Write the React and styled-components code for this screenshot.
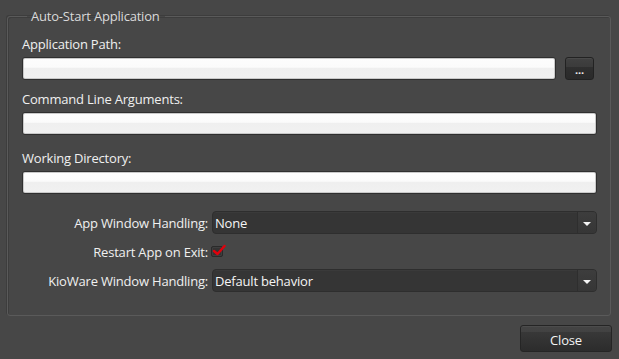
import React from "react";
import styled, { createGlobalStyle } from "styled-components";

const GlobalStyle = createGlobalStyle`
  html, body {
    margin: 0;
    padding: 0;
    background: #474747;
  }
  body {
    font-family: "Open Sans", "Liberation Sans", sans-serif;
    font-size: 13px;
    letter-spacing: -0.2px;
    color: #ededed;
  }
`;

const Dialog = styled.div`
  width: 619px;
  height: 359px;
  box-sizing: border-box;
  padding: 8px 8px 0 7px;
  display: flex;
  flex-direction: column;
`;

const Group = styled.fieldset`
  margin: 0;
  height: 308px;
  box-sizing: border-box;
  border: 1px solid #5a5a5a;
  border-radius: 3px;
  box-shadow: -1px -1px 0 #3d3d3d, inset 1px 1px 0 #3d3d3d;
  padding: 11px 13px 0 14px;
  display: flex;
  flex-direction: column;
`;

const Legend = styled.legend`
  margin-left: 5px;
  padding: 0 5px 0 4px;
  font-size: 13px;
  line-height: 16px;
  color: #dadada;
`;

const Label = styled.div`
  line-height: 18px;
  margin-top: ${(p) => p.$top}px;
  margin-bottom: 4px;
  color: #f0f0f0;
`;

const InputRow = styled.div`
  display: flex;
  align-items: center;
  gap: 9px;
`;

const TextBox = styled.div`
  flex: 1;
  height: 23px;
  box-sizing: border-box;
  border: 1px solid #2f2f2f;
  border-radius: 3px;
  background: linear-gradient(#fdfdfd 0, #fbfbfb 45%, #efefef 46%, #f1f1f1 100%);
  box-shadow: inset 0 0 0 1px #c9c9c9;
`;

const BrowseButton = styled.div`
  width: 29px;
  height: 23px;
  margin-right: 3px;
  box-sizing: border-box;
  border: 1px solid #222;
  border-radius: 3px;
  background: linear-gradient(#414141 0, #3b3b3b 42%, #2f2f2f 44%, #2a2a2a 100%);
  box-shadow: inset 0 1px 0 #4a4a4a;
  color: #f0f0f0;
  font-size: 11px;
  font-weight: bold;
  line-height: 10px;
  display: flex;
  align-items: flex-end;
  justify-content: center;
  padding-bottom: 4px;
`;

const Options = styled.div`
  margin-top: 17px;
  display: grid;
  grid-template-columns: 186px 1fr;
  grid-auto-rows: 23px;
  row-gap: 6px;
  column-gap: 4px;
  align-items: center;
`;

const OptionLabel = styled.div`
  text-align: right;
  color: #f0f0f0;
  white-space: nowrap;
`;

const Select = styled.div`
  height: 23px;
  box-sizing: border-box;
  border: 1px solid #2e2e2e;
  border-radius: 4px;
  background: #353535;
  box-shadow: inset 0 1px 0 #3a3a3a;
  display: flex;
  align-items: center;
  overflow: hidden;
`;

const SelectValue = styled.div`
  flex: 1;
  padding-left: 2px;
  color: #f4f4f4;
`;

const SelectArrow = styled.div`
  width: 18px;
  height: 100%;
  background: linear-gradient(#3d3d3d, #363636);
  border-left: 1px solid #2e2e2e;
  display: flex;
  align-items: center;
  justify-content: center;
`;

const Triangle = styled.div`
  width: 0;
  height: 0;
  border-left: 4px solid transparent;
  border-right: 4px solid transparent;
  border-top: 4px solid #f4f4f4;
  margin-top: 2px;
`;

const CheckBox = styled.div`
  width: 12px;
  height: 11px;
  margin-left: -1px;
  box-sizing: border-box;
  border: 1px solid #2a2a2a;
  border-radius: 2px;
  background: #333;
  box-shadow: inset 0 0 0 1px #3e3e3e;
  position: relative;
`;

const Check = styled.svg`
  position: absolute;
  left: 0;
  top: -4px;
`;

const Footer = styled.div`
  display: flex;
  justify-content: flex-end;
  padding-top: 9px;
`;

const CloseButton = styled.div`
  width: 92px;
  height: 27px;
  margin-right: -1px;
  box-sizing: border-box;
  border: 1px solid #252525;
  border-radius: 3px;
  background: linear-gradient(#444 0, #424242 22%, #383838 24%, #2c2c2c 100%);
  box-shadow: inset 0 1px 0 #4c4c4c;
  color: #f4f4f4;
  display: flex;
  align-items: center;
  justify-content: center;
  padding-top: 2px;
`;

const fields = [
  { label: "Application Path:", top: 0, browse: true },
  { label: "Command Line Arguments:", top: 10 },
  { label: "Working Directory:", top: 14 },
];

export default function App() {
  return (
    <>
      <GlobalStyle />
      <Dialog>
        <Group>
          <Legend>Auto-Start Application</Legend>
          {fields.map((f) => (
            <React.Fragment key={f.label}>
              <Label $top={f.top}>{f.label}</Label>
              <InputRow>
                <TextBox />
                {f.browse && <BrowseButton>...</BrowseButton>}
              </InputRow>
            </React.Fragment>
          ))}
          <Options>
            <OptionLabel>App Window Handling:</OptionLabel>
            <Select>
              <SelectValue>None</SelectValue>
              <SelectArrow>
                <Triangle />
              </SelectArrow>
            </Select>
            <OptionLabel>Restart App on Exit:</OptionLabel>
            <div>
              <CheckBox>
                <Check width="14" height="14" viewBox="0 0 14 14">
                  <path d="M2 8 L5.5 11 L12.5 3" fill="none" stroke="#e0000c" strokeWidth="2.4" strokeLinecap="round" strokeLinejoin="round" />
                </Check>
              </CheckBox>
            </div>
            <OptionLabel>KioWare Window Handling:</OptionLabel>
            <Select>
              <SelectValue>Default behavior</SelectValue>
              <SelectArrow>
                <Triangle />
              </SelectArrow>
            </Select>
          </Options>
        </Group>
        <Footer>
          <CloseButton>Close</CloseButton>
        </Footer>
      </Dialog>
    </>
  );
}
